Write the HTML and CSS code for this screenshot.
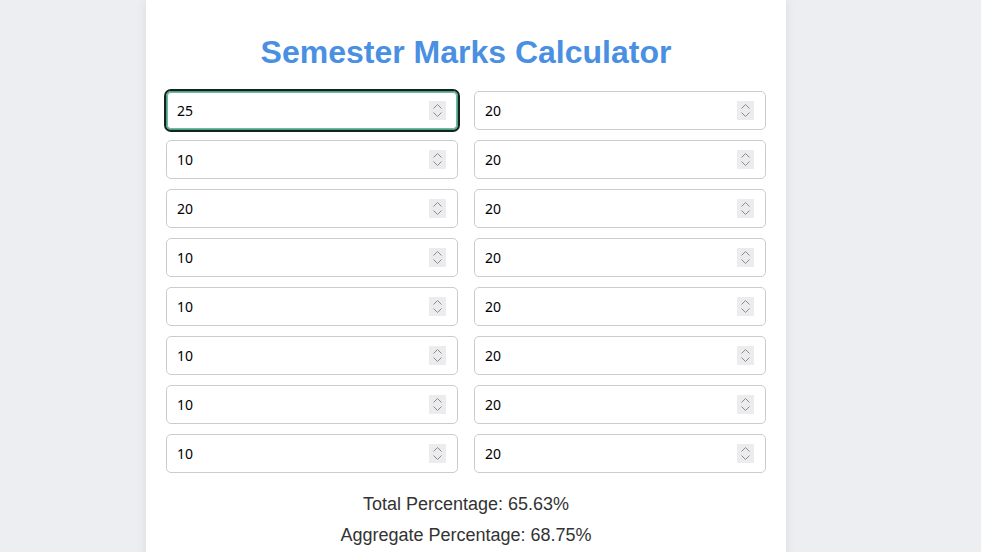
FILE: index.html
```html
<!DOCTYPE html>
<html lang="en">
<head>
<meta charset="utf-8">
<title>Semester Marks Calculator</title>
<link rel="stylesheet" href="styles.css">
</head>
<body>
<div class="container">
  <h1 class="title">Semester Marks Calculator</h1>
  <div class="grid">
    <div class="field"><input class="mark" type="number" value="25" autofocus><span class="spin"><svg width="17" height="19" viewBox="0 0 17 19"><path d="M4.5 7.5 L8.5 3.5 L12.5 7.5 M4.5 11.5 L8.5 15.5 L12.5 11.5" fill="none" stroke="#8a8a8f" stroke-width="1"/></svg></span></div>
    <div class="field"><input class="mark" type="number" value="20"><span class="spin"><svg width="17" height="19" viewBox="0 0 17 19"><path d="M4.5 7.5 L8.5 3.5 L12.5 7.5 M4.5 11.5 L8.5 15.5 L12.5 11.5" fill="none" stroke="#8a8a8f" stroke-width="1"/></svg></span></div>
    <div class="field"><input class="mark" type="number" value="10"><span class="spin"><svg width="17" height="19" viewBox="0 0 17 19"><path d="M4.5 7.5 L8.5 3.5 L12.5 7.5 M4.5 11.5 L8.5 15.5 L12.5 11.5" fill="none" stroke="#8a8a8f" stroke-width="1"/></svg></span></div>
    <div class="field"><input class="mark" type="number" value="20"><span class="spin"><svg width="17" height="19" viewBox="0 0 17 19"><path d="M4.5 7.5 L8.5 3.5 L12.5 7.5 M4.5 11.5 L8.5 15.5 L12.5 11.5" fill="none" stroke="#8a8a8f" stroke-width="1"/></svg></span></div>
    <div class="field"><input class="mark" type="number" value="20"><span class="spin"><svg width="17" height="19" viewBox="0 0 17 19"><path d="M4.5 7.5 L8.5 3.5 L12.5 7.5 M4.5 11.5 L8.5 15.5 L12.5 11.5" fill="none" stroke="#8a8a8f" stroke-width="1"/></svg></span></div>
    <div class="field"><input class="mark" type="number" value="20"><span class="spin"><svg width="17" height="19" viewBox="0 0 17 19"><path d="M4.5 7.5 L8.5 3.5 L12.5 7.5 M4.5 11.5 L8.5 15.5 L12.5 11.5" fill="none" stroke="#8a8a8f" stroke-width="1"/></svg></span></div>
    <div class="field"><input class="mark" type="number" value="10"><span class="spin"><svg width="17" height="19" viewBox="0 0 17 19"><path d="M4.5 7.5 L8.5 3.5 L12.5 7.5 M4.5 11.5 L8.5 15.5 L12.5 11.5" fill="none" stroke="#8a8a8f" stroke-width="1"/></svg></span></div>
    <div class="field"><input class="mark" type="number" value="20"><span class="spin"><svg width="17" height="19" viewBox="0 0 17 19"><path d="M4.5 7.5 L8.5 3.5 L12.5 7.5 M4.5 11.5 L8.5 15.5 L12.5 11.5" fill="none" stroke="#8a8a8f" stroke-width="1"/></svg></span></div>
    <div class="field"><input class="mark" type="number" value="10"><span class="spin"><svg width="17" height="19" viewBox="0 0 17 19"><path d="M4.5 7.5 L8.5 3.5 L12.5 7.5 M4.5 11.5 L8.5 15.5 L12.5 11.5" fill="none" stroke="#8a8a8f" stroke-width="1"/></svg></span></div>
    <div class="field"><input class="mark" type="number" value="20"><span class="spin"><svg width="17" height="19" viewBox="0 0 17 19"><path d="M4.5 7.5 L8.5 3.5 L12.5 7.5 M4.5 11.5 L8.5 15.5 L12.5 11.5" fill="none" stroke="#8a8a8f" stroke-width="1"/></svg></span></div>
    <div class="field"><input class="mark" type="number" value="10"><span class="spin"><svg width="17" height="19" viewBox="0 0 17 19"><path d="M4.5 7.5 L8.5 3.5 L12.5 7.5 M4.5 11.5 L8.5 15.5 L12.5 11.5" fill="none" stroke="#8a8a8f" stroke-width="1"/></svg></span></div>
    <div class="field"><input class="mark" type="number" value="20"><span class="spin"><svg width="17" height="19" viewBox="0 0 17 19"><path d="M4.5 7.5 L8.5 3.5 L12.5 7.5 M4.5 11.5 L8.5 15.5 L12.5 11.5" fill="none" stroke="#8a8a8f" stroke-width="1"/></svg></span></div>
    <div class="field"><input class="mark" type="number" value="10"><span class="spin"><svg width="17" height="19" viewBox="0 0 17 19"><path d="M4.5 7.5 L8.5 3.5 L12.5 7.5 M4.5 11.5 L8.5 15.5 L12.5 11.5" fill="none" stroke="#8a8a8f" stroke-width="1"/></svg></span></div>
    <div class="field"><input class="mark" type="number" value="20"><span class="spin"><svg width="17" height="19" viewBox="0 0 17 19"><path d="M4.5 7.5 L8.5 3.5 L12.5 7.5 M4.5 11.5 L8.5 15.5 L12.5 11.5" fill="none" stroke="#8a8a8f" stroke-width="1"/></svg></span></div>
    <div class="field"><input class="mark" type="number" value="10"><span class="spin"><svg width="17" height="19" viewBox="0 0 17 19"><path d="M4.5 7.5 L8.5 3.5 L12.5 7.5 M4.5 11.5 L8.5 15.5 L12.5 11.5" fill="none" stroke="#8a8a8f" stroke-width="1"/></svg></span></div>
    <div class="field"><input class="mark" type="number" value="20"><span class="spin"><svg width="17" height="19" viewBox="0 0 17 19"><path d="M4.5 7.5 L8.5 3.5 L12.5 7.5 M4.5 11.5 L8.5 15.5 L12.5 11.5" fill="none" stroke="#8a8a8f" stroke-width="1"/></svg></span></div>
  </div>
  <div class="results">
    <p class="result">Total Percentage: 65.63%</p>
    <p class="result">Aggregate Percentage: 68.75%</p>
  </div>
</div>
</body>
</html>
```
FILE: styles.css
```css
html, body {
  margin: 0;
  padding: 0;
  background: #eceef2;
  font-family: "Liberation Sans", Arial, sans-serif;
  overflow: hidden;
}
.container {
  width: 600px;
  margin-left: 146px;
  padding: 13px 20px 20px;
  background: #ffffff;
  box-shadow: 0 0 10px rgba(0, 0, 0, 0.08);
  min-height: 560px;
}
.title {
  margin: 21px 0 20px;
  text-align: center;
  color: #4a90e2;
  font-size: 32px;
  font-weight: bold;
  line-height: 37px;
}
.grid {
  display: grid;
  grid-template-columns: 1fr 1fr;
  column-gap: 16px;
  row-gap: 10px;
}
.field {
  position: relative;
}
.mark {
  display: block;
  box-sizing: border-box;
  width: 100%;
  height: 39px;
  padding: 0 10px;
  border: 1px solid #cccccc;
  border-radius: 5px;
  font-family: "Noto Sans", "Open Sans", sans-serif;
  font-size: 14px;
  color: #000;
  background: #fff;
  -moz-appearance: textfield;
  appearance: textfield;
}
.mark::-webkit-inner-spin-button,
.mark::-webkit-outer-spin-button {
  -webkit-appearance: none;
  margin: 0;
}
.mark:focus {
  border-color: #4a9e86;
  box-shadow: inset 0 0 0 1px #6fb8a2;
  outline: 2px solid #14231f;
  outline-offset: 0;
}
.spin {
  position: absolute;
  top: 10px;
  right: 12px;
  width: 17px;
  height: 19px;
  background: #ececef;
  pointer-events: none;
}
.spin svg {
  display: block;
}
.results {
  margin-top: 21px;
  text-align: center;
}
.result {
  margin: 0 0 10px;
  font-size: 18px;
  line-height: 21px;
  color: #333333;
}
```
